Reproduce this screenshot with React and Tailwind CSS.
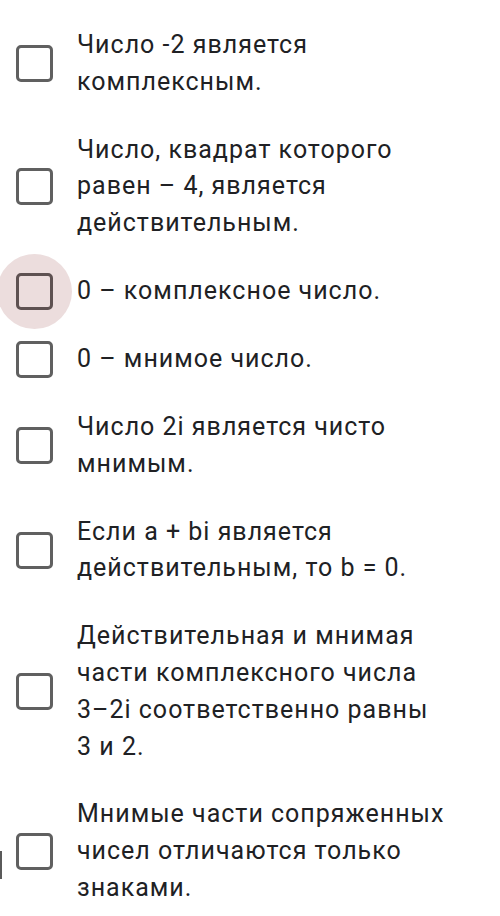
import React from 'react';

const options = [
  'Число -2 является комплексным.',
  'Число, квадрат которого равен – 4, является действительным.',
  '0 – комплексное число.',
  '0 – мнимое число.',
  'Число 2i является чисто мнимым.',
  'Если a + bi является действительным, то b = 0.',
  'Действительная и мнимая части комплексного числа 3–\u20602i соответственно равны 3\u00a0и\u00a02.',
  'Мнимые части сопряженных чисел отличаются только знаками.',
];

const Checkbox = ({ focused }) => (
  <div className="relative w-[37px] h-[37px] shrink-0">
    {/* focus ripple */}
    {focused && (
      <div className="absolute -left-[19px] -top-[19px] w-[75px] h-[75px] rounded-full bg-[#ecdddd]" />
    )}
    <div
      className={`relative w-[37px] h-[37px] rounded-[5px] border-[3.5px] ${
        focused ? 'border-[#5e5151]' : 'border-[#606060]'
      }`}
    />
  </div>
);

export default function App() {
  return (
    <div
      className="w-[500px] h-[916px] bg-white overflow-hidden flex flex-col gap-[31px] pt-[27px] pl-4 pr-[42px] text-[#202124]"
      style={{ fontFamily: 'Roboto, "Noto Sans", sans-serif' }}
    >
      {options.map((text, i) => (
        <div key={i} className="relative flex items-center gap-6">
          {i === 7 && (
            <div className="absolute -left-4 top-[55px] w-[2px] h-[28px] bg-[#5a5a5a]" />
          )}
          <Checkbox focused={i === 2} />
          <p className="flex-1 text-[25px] leading-[36.8px] tracking-[1px]">{text}</p>
        </div>
      ))}
    </div>
  );
}
